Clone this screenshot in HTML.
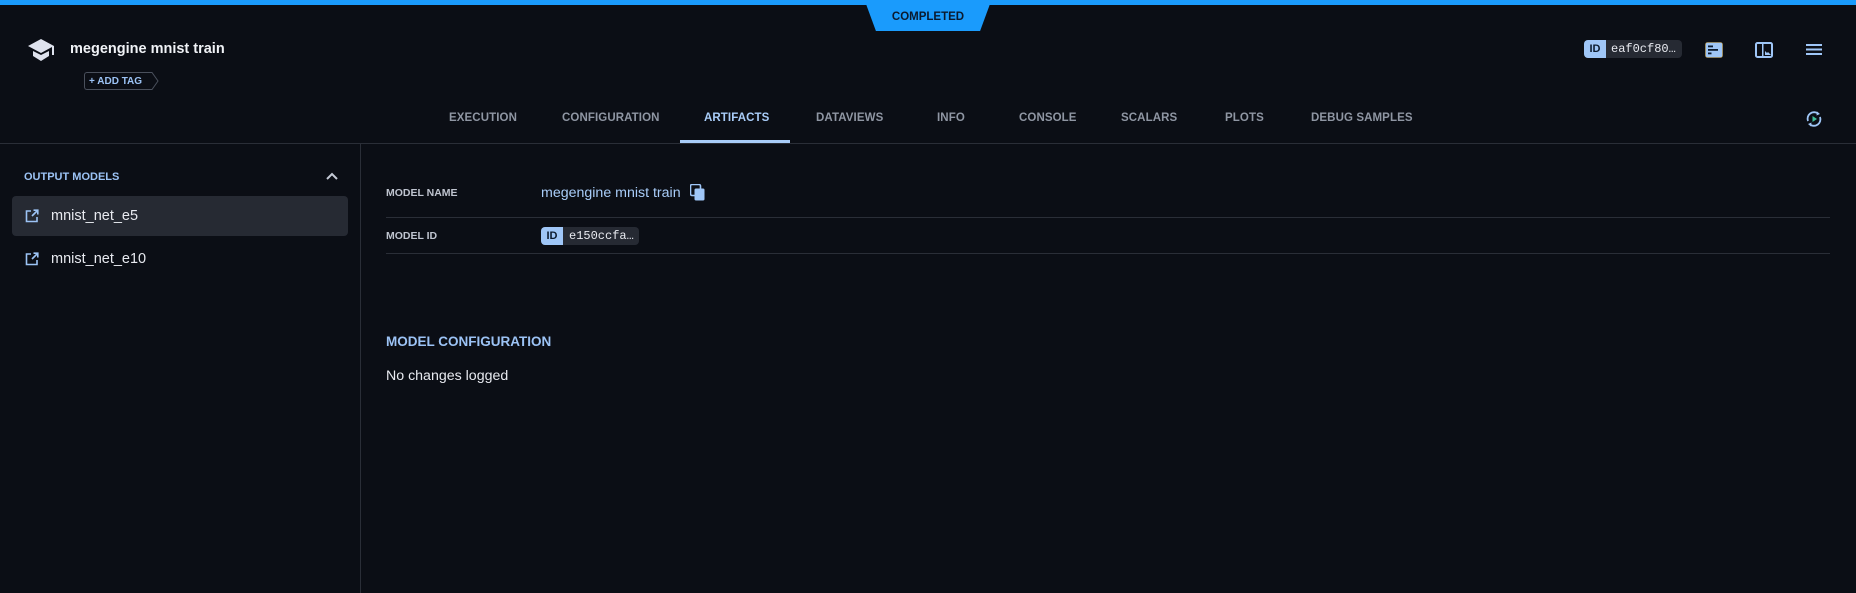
<!DOCTYPE html>
<html><head><meta charset="utf-8"><style>
*{margin:0;padding:0;box-sizing:border-box}
body{width:1856px;height:593px;background:#0b0e15;font-family:"Liberation Sans",sans-serif;color:#e8eaf0;position:relative;overflow:hidden}
.abs{position:absolute}
.tab{position:absolute;top:112px;font-size:11.5px;font-weight:bold;color:#8f96a3;letter-spacing:0.1px}
.mono{font-family:"Liberation Mono",monospace}
</style></head><body>
<div class="abs" style="left:0;top:0;width:1856px;height:5px;background:#1a9bfc"></div>
<div class="abs" style="left:866px;top:4px;width:124px;height:27px;background:#1a9bfc;clip-path:polygon(0 0,100% 0,92% 100%,8% 100%)"></div>
<div class="abs" style="left:866px;top:11px;width:124px;text-align:center;font-size:11.5px;font-weight:bold;color:#0b1a2e">COMPLETED</div>

<svg class="abs" style="left:27px;top:38px" width="28" height="24" viewBox="0 0 28 24"><path d="M14 1L1 8l13 7 11-6v8h2V8z" fill="#dfe3ee"/><path d="M6 13v5l8 5 8-5v-5l-8 4z" fill="#dfe3ee"/></svg>
<div class="abs" style="left:70px;top:41px;font-size:14.5px;font-weight:bold;color:#f0f2f6">megengine mnist train</div>
<div class="abs" style="left:84px;top:72px;width:68px;height:18px;border:1px solid #4a505c;border-right:none;border-radius:3px 0 0 3px"></div>
<svg class="abs" style="left:150px;top:72px" width="9" height="18"><path d="M0 .5h2l6 8.5-6 8.5H0" fill="none" stroke="#4a505c"/></svg>
<div class="abs" style="left:89px;top:76px;font-size:10px;font-weight:bold;color:#9cc3f5">+ ADD TAG</div>

<div class="abs" style="left:1584px;top:40px;width:98px;height:18px;background:#262a33;border-radius:4px;overflow:hidden">
<div style="position:absolute;left:0;top:0;width:22px;height:18px;background:#9fc6f7;color:#0b1a2e;font-size:11px;font-weight:bold;text-align:center;line-height:18px">ID</div>
<div class="mono" style="position:absolute;left:27px;top:2px;font-size:12px;color:#e8eaf0">eaf0cf80…</div></div>
<svg class="abs" style="left:1705px;top:42px" width="18" height="16"><rect x="0.5" y="0.5" width="17" height="15" rx="2" fill="#9fc6f7" stroke="#c9a24a" stroke-width=".6"/><rect x="3" y="3.5" width="5" height="1.8" fill="#0b1a2e"/><rect x="3" y="7" width="10" height="1.8" fill="#0b1a2e"/><rect x="3" y="10.5" width="3.5" height="1.8" fill="#0b1a2e"/></svg>
<svg class="abs" style="left:1755px;top:42px" width="18" height="16"><rect x="1" y="1" width="16" height="14" rx="1.5" fill="none" stroke="#9fc6f7" stroke-width="2"/><rect x="7" y="2" width="1.5" height="12" fill="#9fc6f7"/><path d="M10 13v-4l2 2 1-1 3 3z" fill="#9fc6f7"/></svg>
<svg class="abs" style="left:1806px;top:43px" width="16" height="13"><rect y="1" width="16" height="2" fill="#9fc6f7"/><rect y="5.5" width="16" height="2" fill="#9fc6f7"/><rect y="10" width="16" height="2" fill="#9fc6f7"/></svg>

<div class="tab" style="left:449px">EXECUTION</div>
<div class="tab" style="left:562px">CONFIGURATION</div>
<div class="tab" style="left:704px;color:#a9cdf9">ARTIFACTS</div>
<div class="tab" style="left:816px">DATAVIEWS</div>
<div class="tab" style="left:937px">INFO</div>
<div class="tab" style="left:1019px">CONSOLE</div>
<div class="tab" style="left:1121px">SCALARS</div>
<div class="tab" style="left:1225px">PLOTS</div>
<div class="tab" style="left:1311px">DEBUG SAMPLES</div>
<div class="abs" style="left:680px;top:140px;width:110px;height:3px;background:#a9cdf9"></div>
<svg class="abs" style="left:1805px;top:110px" width="18" height="18" viewBox="0 0 18 18"><path d="M3 11A6.5 6.5 0 0 1 13 3.5M15 7a6.5 6.5 0 0 1-10 7.5" fill="none" stroke="#9fc6f7" stroke-width="1.8"/><path d="M12 1.5l3 2.5-3.5 1.5zM6 16.5L3 14l3.5-1.5z" fill="#9fc6f7"/><path d="M7.5 6v6l4.5-3z" fill="#3fbf9a"/></svg>
<div class="abs" style="left:0;top:143px;width:1856px;height:1px;background:#2a2e37"></div>

<div class="abs" style="left:360px;top:143px;width:1px;height:450px;background:#2a2e37"></div>
<div class="abs" style="left:24px;top:171px;font-size:11px;font-weight:bold;color:#9cc3f5">OUTPUT MODELS</div>
<svg class="abs" style="left:325px;top:171px" width="14" height="10"><path d="M2 8l5-5 5 5" fill="none" stroke="#c5cad5" stroke-width="2"/></svg>
<div class="abs" style="left:12px;top:196px;width:336px;height:40px;background:#262a33;border-radius:4px"></div>
<svg class="abs" style="left:25px;top:209px" width="14" height="14"><path d="M6 2H1.5v10.5H12V8" fill="none" stroke="#9cc3f5" stroke-width="1.6"/><path d="M7 7l5.5-5.5M8.5 1.2h4.3v4.3" fill="none" stroke="#9cc3f5" stroke-width="1.6"/></svg>
<div class="abs" style="left:51px;top:208px;font-size:14.5px;color:#e8eaf0">mnist_net_e5</div>
<svg class="abs" style="left:25px;top:252px" width="14" height="14"><path d="M6 2H1.5v10.5H12V8" fill="none" stroke="#9cc3f5" stroke-width="1.6"/><path d="M7 7l5.5-5.5M8.5 1.2h4.3v4.3" fill="none" stroke="#9cc3f5" stroke-width="1.6"/></svg>
<div class="abs" style="left:51px;top:251px;font-size:14.5px;color:#e8eaf0">mnist_net_e10</div>

<div class="abs" style="left:386px;top:187px;font-size:10.5px;font-weight:bold;color:#bfc4cf">MODEL NAME</div>
<div class="abs" style="left:541px;top:185px;font-size:14.2px;color:#a9cdf9">megengine mnist train</div>
<svg class="abs" style="left:690px;top:184px" width="16" height="17"><rect x="0.5" y="0.5" width="10" height="11" rx="1.5" fill="#0b0e15" stroke="#9fc6f7" stroke-width="1.6"/><rect x="4.5" y="4.5" width="10" height="12" rx="1.5" fill="#9fc6f7"/></svg>
<div class="abs" style="left:386px;top:217px;width:1444px;height:1px;background:#2a2e37"></div>
<div class="abs" style="left:386px;top:230px;font-size:10.5px;font-weight:bold;color:#bfc4cf">MODEL ID</div>
<div class="abs" style="left:541px;top:227px;width:98px;height:18px;background:#262a33;border-radius:4px;overflow:hidden">
<div style="position:absolute;left:0;top:0;width:22px;height:18px;background:#9fc6f7;color:#0b1a2e;font-size:11px;font-weight:bold;text-align:center;line-height:18px">ID</div>
<div class="mono" style="position:absolute;left:28px;top:2px;font-size:12px;color:#e8eaf0">e150ccfa…</div></div>
<div class="abs" style="left:386px;top:253px;width:1444px;height:1px;background:#2a2e37"></div>

<div class="abs" style="left:386px;top:334px;font-size:13.5px;font-weight:bold;color:#9cc3f5">MODEL CONFIGURATION</div>
<div class="abs" style="left:386px;top:368px;font-size:14.2px;color:#e8eaf0">No changes logged</div>
</body></html>
